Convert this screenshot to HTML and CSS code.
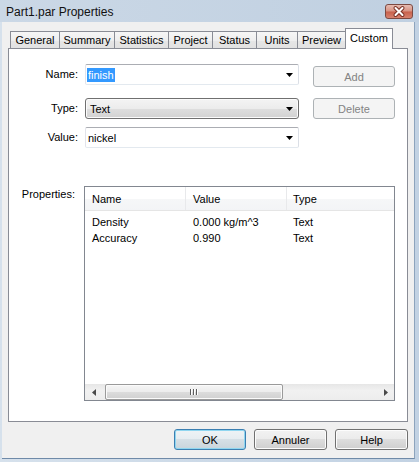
FILE: index.html
```html
<!DOCTYPE html>
<html lang="en">
<head>
  <meta charset="UTF-8">
  <title>Part1.par Properties</title>
  <link rel="stylesheet" href="styles.css">
</head>
<body>
  <div class="window">
    <div class="titlebar">
      <span class="title">Part1.par Properties</span>
      <div class="close">
        <svg width="26" height="13" viewBox="0 0 26 13">
          <path d="M9.5 3L16.5 10M16.5 3L9.5 10" stroke="#7a3125" stroke-width="4" stroke-linecap="round"/>
          <path d="M9.5 3L16.5 10M16.5 3L9.5 10" stroke="#fff" stroke-width="2" stroke-linecap="round"/>
        </svg>
      </div>
    </div>

    <div class="client">
      <div class="tabs">
        <div class="tab t-general">General</div>
        <div class="tab t-summary">Summary</div>
        <div class="tab t-statistics">Statistics</div>
        <div class="tab t-project">Project</div>
        <div class="tab t-status">Status</div>
        <div class="tab t-units">Units</div>
        <div class="tab t-preview">Preview</div>
        <div class="tab t-custom active">Custom</div>
      </div>

      <div class="panel">
        <div class="field row-name">
          <label class="field-label">Name:</label>
          <div class="combo edit">
            <span class="selected-text">finish</span>
            <svg class="drop-arrow" width="7" height="4" viewBox="0 0 7 4"><path d="M0 0H7L3.5 4Z" fill="#000"/></svg>
          </div>
          <button class="side-btn add" disabled>Add</button>
        </div>

        <div class="field row-type">
          <label class="field-label">Type:</label>
          <div class="combo list">
            <span class="combo-text">Text</span>
            <svg class="drop-arrow" width="7" height="4" viewBox="0 0 7 4"><path d="M0 0H7L3.5 4Z" fill="#000"/></svg>
          </div>
          <button class="side-btn" disabled>Delete</button>
        </div>

        <div class="field row-value">
          <label class="field-label">Value:</label>
          <div class="combo edit">
            <span class="combo-text">nickel</span>
            <svg class="drop-arrow" width="7" height="4" viewBox="0 0 7 4"><path d="M0 0H7L3.5 4Z" fill="#000"/></svg>
          </div>
        </div>

        <div class="props">
          <div class="props-label">Properties:</div>
          <div class="listview">
            <div class="lv-header">
              <div class="lv-col col-name">Name</div>
              <div class="lv-col col-value">Value</div>
              <div class="lv-col col-type">Type</div>
            </div>
            <div class="lv-body">
              <div class="lv-row">
                <div class="lv-cell col-name">Density</div>
                <div class="lv-cell col-value">0.000 kg/m^3</div>
                <div class="lv-cell col-type">Text</div>
              </div>
              <div class="lv-row">
                <div class="lv-cell col-name">Accuracy</div>
                <div class="lv-cell col-value">0.990</div>
                <div class="lv-cell col-type">Text</div>
              </div>
            </div>
            <div class="hscroll">
              <div class="sb-arrow">
                <svg width="4" height="7" viewBox="0 0 4 7"><path d="M4 0V7L0 3.5Z" fill="#4a4a4a"/></svg>
              </div>
              <div class="sb-track">
                <div class="sb-thumb">
                  <div class="grip"><span></span><span></span><span></span></div>
                </div>
              </div>
              <div class="sb-arrow">
                <svg width="4" height="7" viewBox="0 0 4 7"><path d="M0 0V7L4 3.5Z" fill="#4a4a4a"/></svg>
              </div>
            </div>
          </div>
        </div>
      </div>

      <div class="dialog-buttons">
        <button class="push default b-ok">OK</button>
        <button class="push b-cancel">Annuler</button>
        <button class="push b-help">Help</button>
      </div>
    </div>
  </div>
</body>
</html>
```

FILE: styles.css
```css
* {
  box-sizing: border-box;
}
body {
  margin: 0;
  font-family: "Liberation Sans", Arial, sans-serif;
  font-size: 11px;
  color: #000;
}
button {
  font-family: inherit;
  font-size: 11px;
  padding: 0;
}

/* window frame */
.window {
  width: 419px;
  height: 462px;
  display: flex;
  flex-direction: column;
  overflow: hidden;
  background: linear-gradient(to right, #d6e1ec, #c2d2e3);
}
.titlebar {
  height: 22px;
  flex: none;
  display: flex;
  align-items: flex-start;
  padding: 0 6px;
  background: linear-gradient(to right, #cbd8e6, #c0d0e1);
}
.title {
  font-size: 12px;
  line-height: 24px;
  color: #111;
}
.close {
  margin-left: auto;
  margin-top: 4px;
  width: 28px;
  height: 15px;
  border: 1px solid #7c4a42;
  border-radius: 3px;
  background: linear-gradient(#e6bcb2, #d89282 48%, #c8604b 52%, #d7826f);
  display: flex;
}
.client {
  flex: 1;
  margin: 0 4px 3px 2px;
  padding: 6px 6px 0 6px;
  background: #f0f0f0;
  border-right: 1px solid #8da4bd;
  border-bottom: 1px solid #6f8aa8;
  display: flex;
  flex-direction: column;
}

/* tab strip */
.tabs {
  display: flex;
  align-items: flex-end;
  height: 21px;
  padding-left: 3px;
}
.tab {
  height: 18px;
  margin-left: -1px;
  border: 1px solid #898c95;
  border-bottom: none;
  background: linear-gradient(#f6f6f6, #eeeeee 50%, #e6e6e6 51%, #e1e1e1);
  text-align: center;
  line-height: 17px;
}
.tab.active {
  position: relative;
  z-index: 1;
  height: 21px;
  background: #fff;
  line-height: 18px;
}
.t-general { width: 50px; }
.t-summary { width: 56px; }
.t-statistics { width: 55px; }
.t-project { width: 45px; }
.t-status { width: 45px; }
.t-units { width: 42px; }
.t-preview { width: 49px; }
.t-custom { width: 48px; }

.panel {
  margin-top: -1px;
  width: 400px;
  height: 374px;
  border: 1px solid #898c95;
  background: #fff;
  padding-top: 15px;
}

/* name / type / value rows */
.field {
  display: flex;
  align-items: flex-start;
  height: 21px;
}
.row-type {
  margin-top: 13px;
}
.row-value {
  margin-top: 8px;
}
.field-label {
  width: 70px;
  padding-right: 1px;
  text-align: right;
  line-height: 21px;
}
.combo {
  margin-left: 6px;
  width: 214px;
  height: 21px;
  display: flex;
  align-items: center;
}
.combo.edit {
  background: #fff;
  border: 1px solid;
  border-color: #abadb3 #dbdfe6 #e3e9ef #e2e3ea;
  border-radius: 2px;
  padding-left: 1px;
}
.combo.list {
  border: 1px solid #707070;
  border-radius: 3px;
  background: linear-gradient(#f4f4f4, #ececec 50%, #dedede 51%, #d2d2d2);
  box-shadow: inset 0 0 0 1px #fbfbfb;
  padding-left: 3px;
}
.combo-text {
  padding-left: 1px;
}
.selected-text {
  background: #3399ff;
  color: #fff;
  padding: 0 1px;
  line-height: 14px;
}
.drop-arrow {
  margin-left: auto;
  margin-right: 5px;
}
.side-btn {
  margin-left: 14px;
  width: 82px;
  height: 21px;
  border: 1px solid #adb2b5;
  border-radius: 3px;
  background: #f4f4f4;
  color: #838383;
}
.side-btn.add {
  margin-top: 2px;
}

/* properties list */
.props {
  display: flex;
  align-items: flex-start;
  margin-top: 38px;
}
.props-label {
  width: 70px;
  padding-right: 4px;
  text-align: right;
  margin-top: 2px;
  line-height: 13px;
}
.listview {
  margin-left: 5px;
  width: 311px;
  height: 215px;
  border: 1px solid #828790;
  background: #fff;
  display: flex;
  flex-direction: column;
}
.lv-header {
  height: 24px;
  flex: none;
  display: flex;
  border-bottom: 1px solid #e5e5e5;
  background: linear-gradient(#ffffff, #ffffff 50%, #f6f7f8 51%, #f3f4f6);
}
.lv-col {
  height: 23px;
  padding-top: 2px;
  line-height: 21px;
  border-right: 1px solid #e8e9eb;
}
.lv-body {
  flex: 1;
  padding-top: 3px;
}
.lv-row {
  display: flex;
  height: 16px;
  line-height: 16px;
}
.col-name,
.col-value {
  width: 101px;
  padding-left: 7px;
}
.col-type {
  flex: 1;
  padding-left: 6px;
}
.lv-col.col-type {
  border-right: none;
}

.hscroll {
  height: 16px;
  flex: none;
  display: flex;
  background: linear-gradient(#e6e6e6, #f1f1f1 40%, #ededed);
}
.sb-arrow {
  width: 17px;
  display: flex;
  align-items: center;
  justify-content: center;
}
.sb-track {
  flex: 1;
  display: flex;
}
.sb-thumb {
  margin-left: 3px;
  width: 178px;
  height: 16px;
  border: 1px solid #9a9a9a;
  border-radius: 2px;
  background: linear-gradient(#f5f5f5, #ececec 50%, #dcdcdc 51%, #d0d0d0);
  box-shadow: inset 0 0 0 1px #fbfbfb;
  display: flex;
  align-items: center;
  justify-content: center;
}
.grip {
  display: flex;
  gap: 1px;
}
.grip span {
  width: 1px;
  height: 6px;
  background: #5e5e5e;
  box-shadow: 1px 0 0 #fff;
  margin-right: 1px;
}

/* dialog buttons */
.dialog-buttons {
  margin-top: 7px;
  display: flex;
  justify-content: flex-end;
  gap: 8px;
}
.push {
  height: 21px;
  border: 1px solid #707070;
  border-radius: 3px;
  background: linear-gradient(#f2f2f2, #ebebeb 49%, #dddddd 50%, #cfcfcf);
  box-shadow: inset 0 0 0 1px #fcfcfc;
  color: #000;
}
.push.default {
  border-color: #3c7fb1;
  box-shadow: inset 0 0 0 1px #8fd6f0;
  background: linear-gradient(#eef3f6, #e6edf1 49%, #d6e0e6 50%, #c9d5dc);
}
.b-ok { width: 72px; }
.b-cancel { width: 73px; }
.b-help { width: 73px; }
```
